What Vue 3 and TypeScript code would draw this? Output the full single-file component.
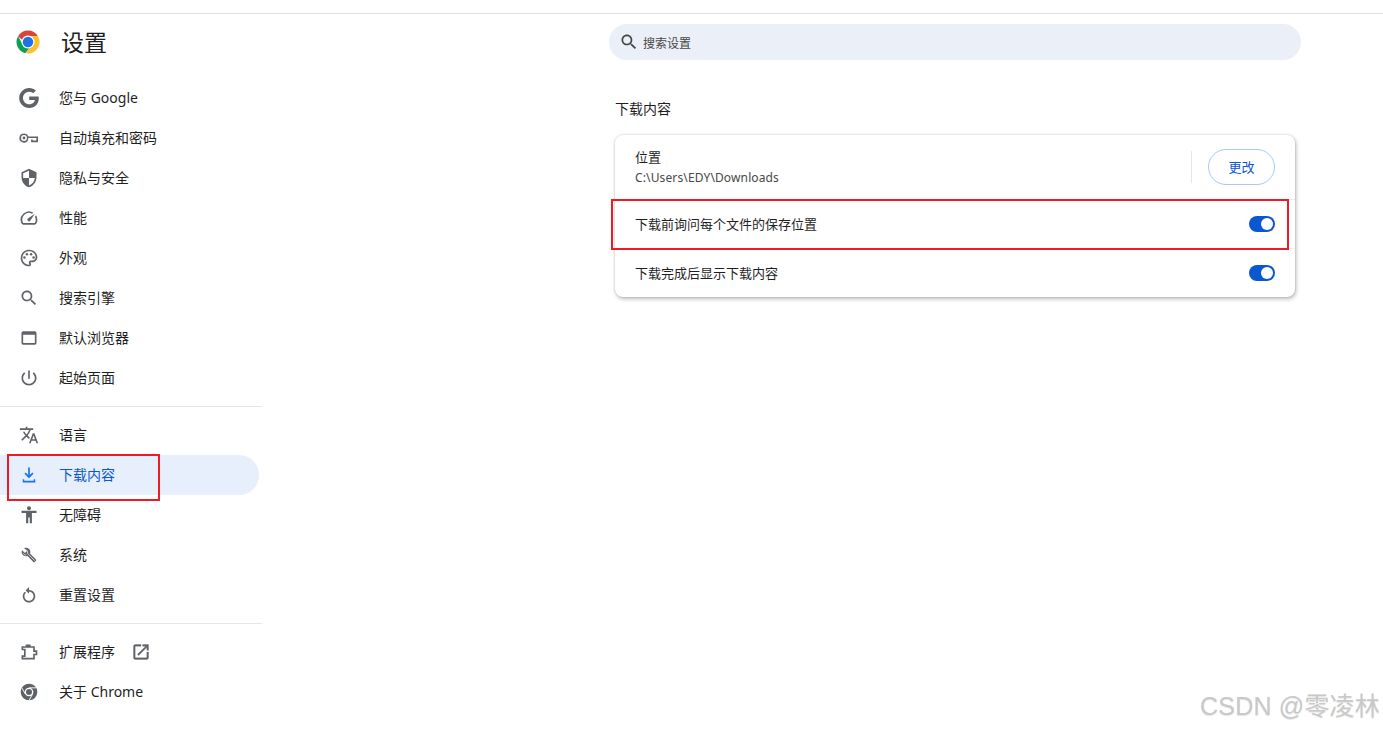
<script setup lang="ts">
interface NavItem {
  label: string
  paths: string[]
  slits?: string
  small?: boolean
  active?: boolean
  external?: boolean
}
const groups: NavItem[][] = [
  [
    { label: '您与 Google', paths: ['M12.24 10.285V14.4h6.806c-.275 1.765-2.056 5.174-6.806 5.174-4.095 0-7.439-3.389-7.439-7.574s3.345-7.574 7.439-7.574c2.33 0 3.891.989 4.785 1.849l3.254-3.138C18.189 1.186 15.479 0 12.24 0c-6.635 0-12 5.365-12 12s5.365 12 12 12c6.926 0 11.52-4.869 11.52-11.726 0-.788-.085-1.39-.189-1.989H12.24z'] },
    { label: '自动填充和密码', paths: ['M6 6.500a5.500 5.500 0 1 0 5.200 7.300h3.300V17H22.800V10.200H11.200A5.500 5.500 0 0 0 6 6.500zM6 8.500a3.500 3.500 0 1 1 0 7 3.500 3.500 0 0 1 0-7zM6 10.300a1.700 1.700 0 1 1 0 3.400 1.700 1.700 0 0 1 0-3.400zM11 12h9.800v3h-4.300v-1.200H11z'] },
    { label: '隐私与安全', paths: ['M12 1L3 5v6c0 5.55 3.84 10.74 9 12 5.16-1.26 9-6.45 9-12V5l-9-4zm0 10.99h7c-.53 4.12-3.28 7.79-7 8.94V12H5V6.3l7-3.11v8.8z'] },
    { label: '性能', paths: ['M20.38 8.57l-1.23 1.85a8 8 0 0 1-.22 7.58H5.07A8 8 0 0 1 15.58 6.85l1.85-1.23A10 10 0 0 0 3.35 19a2 2 0 0 0 1.72 1h13.85a2 2 0 0 0 1.74-1 10 10 0 0 0-.27-10.44z', 'M10.59 15.41a2 2 0 0 0 2.83 0l5.66-8.49-8.49 5.66a2 2 0 0 0 0 2.83z'] },
    { label: '外观', paths: ['M12 22C6.49 22 2 17.51 2 12S6.49 2 12 2s10 4.04 10 9c0 3.31-2.69 6-6 6h-1.77c-.28 0-.5.22-.5.5 0 .12.05.23.13.33.41.47.64 1.06.64 1.67 0 1.38-1.12 2.5-2.5 2.5zm0-18c-4.41 0-8 3.59-8 8s3.59 8 8 8c.28 0 .5-.22.5-.5 0-.16-.08-.28-.14-.35-.41-.46-.63-1.05-.63-1.65 0-1.38 1.12-2.5 2.5-2.5H16c2.21 0 4-1.79 4-4 0-3.86-3.59-7-8-7z', 'M5 11.5a1.5 1.5 0 1 0 3 0 1.5 1.5 0 1 0-3 0z', 'M8 7.5a1.5 1.5 0 1 0 3 0 1.5 1.5 0 1 0-3 0z', 'M13 7.5a1.5 1.5 0 1 0 3 0 1.5 1.5 0 1 0-3 0z', 'M16 11.5a1.5 1.5 0 1 0 3 0 1.5 1.5 0 1 0-3 0z'] },
    { label: '搜索引擎', paths: ['M15.5 14h-.79l-.28-.27C15.41 12.59 16 11.11 16 9.5 16 5.91 13.09 3 9.5 3S3 5.91 3 9.5 5.91 16 9.5 16c1.61 0 3.09-.59 4.23-1.57l.27.28v.79l5 4.99L20.49 19l-4.99-5zm-6 0C7.01 14 5 11.99 5 9.5S7.01 5 9.5 5 14 7.01 14 9.5 11.99 14 9.5 14z'] },
    { label: '默认浏览器', paths: ['M19 4H5c-1.11 0-2 .9-2 2v12c0 1.1.89 2 2 2h14c1.1 0 2-.9 2-2V6c0-1.1-.89-2-2-2zm0 14H5V8h14v10z'] },
    { label: '起始页面', paths: ['M13 3h-2v10h2V3zm4.83 2.17l-1.42 1.42C17.99 7.86 19 9.81 19 12c0 3.87-3.13 7-7 7s-7-3.13-7-7c0-2.19 1.01-4.14 2.58-5.42L6.17 5.17C4.23 6.82 3 9.26 3 12c0 4.97 4.03 9 9 9s9-4.03 9-9c0-2.74-1.23-5.18-3.17-6.83z'] },
  ],
  [
    { label: '语言', paths: ['M12.87 15.07l-2.54-2.51.03-.03c1.74-1.94 2.98-4.17 3.71-6.53H17V4h-7V2H8v2H1v1.99h11.17C11.5 7.92 10.44 9.75 9 11.35 8.07 10.32 7.3 9.19 6.69 8h-2c.73 1.63 1.73 3.17 2.98 4.56l-5.09 5.02L4 19l5-5 3.11 3.11.76-2.04zM18.5 10h-2L12 22h2l1.12-3h4.75L21 22h2l-4.5-12zm-2.62 7l1.62-4.33L19.12 17h-3.24z'] },
    { label: '下载内容', active: true, paths: ['M11 3h2v9l3-3 1.400 1.400L12 16l-5.400-5.600L8 9l3 3z', 'M4.500 17h1.800v2h11.400v-2h1.800v4h-15z'] },
    { label: '无障碍', paths: ['M9.600 4a2.400 2.400 0 1 0 4.800 0 2.400 2.400 0 1 0-4.800 0z', 'M3 7h18v2.600h-5.500V22h-2.600v-7h-1.800v7H8.500V9.600H3z'] },
    { label: '系统', small: true, slits: 'M5 4.200c2.400-.6 4.600.9 5 3.300.1.800 0 1.400-.2 2L20.500 20.500M3.500 9.500c.6 1.600 2.500 2.800 4.500 2.500', paths: ['M22.700 19l-9.100-9.100c.9-2.300.4-5-1.500-6.900-2-2-5-2.400-7.400-1.300L9 6 6 9 1.600 4.700C.4 7.100.9 10.100 2.900 12.100c1.900 1.900 4.600 2.400 6.900 1.500l9.100 9.100c.4.4 1 .4 1.400 0l2.300-2.300c.5-.4.5-1.100.1-1.400z'] },
    { label: '重置设置', paths: ['M12 6V2.500L8 6.500l4 4V8c3 0 5.500 2.400 5.500 5.500S15 19 12 19s-5.500-2.400-5.500-5.500c0-1.700.7-3.100 1.900-4.100L7 8c-1.600 1.400-2.500 3.300-2.500 5.500 0 4.200 3.400 7.500 7.500 7.500s7.500-3.300 7.500-7.500S16.200 6 12 6z'] },
  ],
  [
    { label: '扩展程序', external: true, paths: ['M8 5V3h6v2h5v5h3v6h-3v5H3v-5h3v-6H3V5zM5 7v1h3v10H5v1h12v-5h3v-2h-3V7z'] },
    { label: '关于 Chrome', slits: 'M12 7H20.700M16.330 14.500L12 22M7.670 14.500L3.340 7', paths: ['M12 2a10 10 0 1 0 0 20 10 10 0 0 0 0-20zm0 4.800a5.200 5.200 0 1 1 0 10.400 5.200 5.200 0 0 1 0-10.400z', 'M12 8.400a3.600 3.600 0 1 1 0 7.200 3.600 3.600 0 0 1 0-7.200z'] },
  ],
]
const toggleRows = ['下载前询问每个文件的保存位置', '下载完成后显示下载内容']
</script>

<template>
  <div class="page">
    <div class="topbar"></div>
    <div class="body">
      <aside class="sidebar">
        <header class="brand">
          <svg class="logo" viewBox="0 0 48 48" aria-hidden="true">
            <circle cx="24" cy="24" r="24" fill="#fff" />
            <path fill="#db4437" d="M24 1a23 23 0 0 1 19.920 11.500H24a11.500 11.500 0 0 0-11 8.200L4.080 12.500A23 23 0 0 1 24 1z" />
            <path fill="#0f9d58" d="M4.080 12.500L14 29.800a11.500 11.500 0 0 0 13.500 5.700L18.500 46.300A23 23 0 0 1 4.080 12.500z" />
            <path fill="#fbc02d" d="M43.920 12.500A23 23 0 0 1 20 46.650L30 30a11.500 11.500 0 0 0 0-17.500z" />
            <circle cx="24" cy="24" r="13" fill="#fff" />
            <circle cx="24" cy="24" r="10.500" fill="#1a73e8" />
          </svg>
          <h1 class="title">设置</h1>
        </header>
        <nav class="nav">
          <template v-for="(group, gi) in groups" :key="gi">
            <div v-if="gi > 0" class="rule"></div>
            <a v-for="item in group" :key="item.label" class="item" :class="{ active: item.active }">
              <svg class="icon" :class="{ small: item.small }" viewBox="0 0 24 24" aria-hidden="true">
                <path v-for="(d, pi) in item.paths" :key="pi" :d="d" />
                <path v-if="item.slits" class="slit" :d="item.slits" />
              </svg>
              <span>{{ item.label }}</span>
              <svg v-if="item.external" class="ext" viewBox="0 0 24 24" aria-hidden="true">
                <path d="M19 19H5V5h7V3H5c-1.110 0-2 .9-2 2v14c0 1.100.89 2 2 2h14c1.100 0 2-.9 2-2v-7h-2v7zM14 3v2h3.590l-9.830 9.830 1.410 1.410L19 6.410V10h2V3h-7z" />
              </svg>
            </a>
          </template>
        </nav>
      </aside>

      <main class="main">
        <div class="search">
          <svg class="search-icon" viewBox="0 0 24 24" aria-hidden="true">
            <path d="M15.500 14h-.79l-.28-.27C15.410 12.590 16 11.110 16 9.500 16 5.910 13.090 3 9.500 3S3 5.910 3 9.500 5.910 16 9.500 16c1.610 0 3.090-.59 4.230-1.570l.27.28v.79l5 4.990L20.490 19l-4.990-5zm-6 0C7.010 14 5 11.990 5 9.500S7.010 5 9.500 5 14 7.010 14 9.500 11.990 14 9.500 14z" />
          </svg>
          <span>搜索设置</span>
        </div>
        <section class="section">
          <h2 class="heading">下载内容</h2>
          <div class="card">
            <div class="row first">
              <div class="info">
                <div class="label">位置</div>
                <div class="sub">C:\Users\EDY\Downloads</div>
              </div>
              <div class="sep"></div>
              <button class="change" type="button">更改</button>
            </div>
            <div v-for="text in toggleRows" :key="text" class="row toggle-row">
              <div class="label">{{ text }}</div>
              <div class="toggle"><i></i></div>
            </div>
          </div>
        </section>
      </main>
    </div>

    <div class="mark mark-nav"></div>
    <div class="mark mark-row"></div>
    <div class="watermark">CSDN @零凌林</div>
  </div>
</template>

<style>
html, body { margin: 0; background: #fff; }
</style>

<style scoped>
.page {
  position: relative;
  height: 730px;
  overflow: hidden;
  background: #fff;
  color: #1f1f1f;
  font-family: "Noto Sans", "Noto Sans CJK SC", sans-serif;
  font-size: 14px;
}
.topbar { height: 13px; border-bottom: 1px solid #e0e0e0; }
.body { display: flex; }
.sidebar { width: 262px; flex: none; }
.brand { display: flex; align-items: center; height: 58px; padding-left: 16px; }
.logo { width: 24px; height: 24px; margin-top: -2px; }
.title { margin: 0 0 0 21px; font-size: 23px; font-weight: 400; line-height: 30px; transform: translateY(-1px); }
.nav { padding-top: 6px; }
.item { display: flex; align-items: center; height: 40px; padding-left: 19px; border-radius: 0 20px 20px 0; margin-right: 3px; }
.item span { line-height: 20px; }
.icon { width: 20px; height: 20px; margin-right: 20px; fill: #5f6368; fill-rule: evenodd; flex: none; }
.icon.small { transform: scale(.8); }
.slit { fill: none; stroke: #fff; stroke-width: 1.100; }
.ext { width: 20px; height: 20px; margin-left: 16px; fill: #5f6368; stroke: #5f6368; stroke-width: .4; }
.item.active { background: #e7eefc; color: #0b57d0; }
.item.active .icon { fill: #1a73e8; }
.rule { height: 1px; margin: 8px 0; background: #e6e6e6; }
.main { flex: 1; padding: 10px 82px 0 347px; }
.search {
  display: flex;
  align-items: center;
  height: 36px;
  padding-left: 10px;
  border-radius: 18px;
  background: #ebeff7;
  color: #474747;
  font-size: 12px;
}
.search span { padding-top: 1px; }
.search-icon { width: 20px; height: 20px; margin-right: 4px; fill: #444746; }
.section { width: 680px; margin: 38px 0 0 6px; }
.heading { margin: 0; font-size: 14px; font-weight: 400; line-height: 22px; }
.card { margin-top: 15px; border-radius: 8px; background: #fff; box-shadow: 1px 2px 4px rgba(60, 64, 67, .35), 0 0 2px rgba(60, 64, 67, .25); }
.row { display: flex; align-items: center; justify-content: space-between; padding: 0 20px; }
.first { height: 64px; }
.toggle-row { height: 49px; border-top: 1px solid #ececec; box-sizing: border-box; }
.toggle-row .label { margin-top: -1px; }
.info { flex: 1; }
.label { font-size: 13px; line-height: 20px; }
.sub { margin-top: 2px; color: #474747; font-size: 12px; line-height: 18px; letter-spacing: .13px; }
.sep { width: 1px; height: 32px; background: #e6e6e6; margin-right: 16px; }
.change {
  width: 67px;
  height: 36px;
  padding: 0 0 2px;
  border: 1px solid #a8c7fa;
  border-radius: 18px;
  background: #fff;
  color: #0b57d0;
  font-family: inherit;
  font-size: 13px;
}
.toggle { position: relative; width: 26px; height: 16px; border-radius: 8px; background: #0b57d0; }
.toggle i { position: absolute; top: 2px; right: 2px; width: 12px; height: 12px; border-radius: 50%; background: #fff; }
.mark { position: absolute; box-sizing: border-box; border: 2px solid #ed1c24; pointer-events: none; }
.mark-nav { left: 7px; top: 454px; width: 153px; height: 47px; }
.mark-row { left: 611px; top: 199px; width: 678px; height: 51px; }
.watermark {
  position: absolute;
  right: 3px;
  bottom: 9px;
  color: #c9c9c9;
  font-family: "Liberation Sans", "Noto Sans CJK SC", sans-serif;
  font-size: 25px;
  letter-spacing: .2px;
  line-height: 30px;
  white-space: nowrap;
  text-shadow: 0 1px 1px #e4e4e4;
}
</style>
